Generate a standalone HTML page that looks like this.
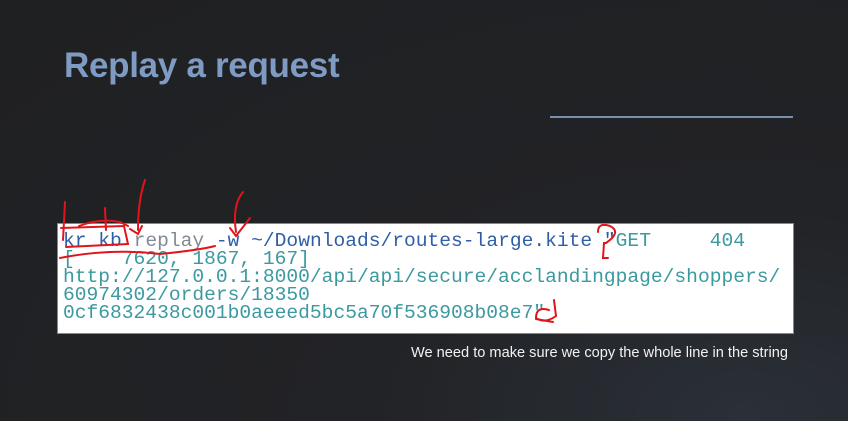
<!DOCTYPE html>
<html><head><meta charset="utf-8"><style>
html,body{margin:0;padding:0}
body{width:848px;height:421px;overflow:hidden;background:radial-gradient(ellipse at 88% 98%,#2a3038 0%,#222326 35%,#1f2022 100%);position:relative;font-family:"Liberation Sans",sans-serif}
.t{position:absolute;left:64px;top:46px;font-size:35px;font-weight:bold;color:#7f9bc4;letter-spacing:-0.3px}
.hr{position:absolute;left:550px;top:116px;width:243px;height:2px;background:#7890ab}
.box{position:absolute;left:57px;top:223px;width:735px;height:109px;background:#fff;border:1px solid #888}
pre{position:absolute;left:5px;top:8px;margin:0;font-family:"Liberation Mono",monospace;font-size:19.6px;line-height:18px;color:#3b999f}
.b{color:#2f5ea8}.g{color:#808a96}
.cap{position:absolute;left:411px;top:345px;font-size:14.6px;color:#f2f2f2}
svg{position:absolute;left:0;top:0}
</style></head><body>
<div class="t">Replay a request</div>
<div class="hr"></div>
<div class="box"><pre><span class="b">kr kb </span><span class="g">replay</span><span class="b"> -w ~/Downloads/routes-large.kite "</span>GET     404
[    7620, 1867, 167]
http://127.0.0.1:8000/api/api/secure/acclandingpage/shoppers/
60974302/orders/18350
0cf6832438c001b0aeeed5bc5a70f536908b08e7"</pre></div>
<div class="cap">We need to make sure we copy the whole line in the string</div>
<svg width="848" height="421" fill="none" stroke="#e0141c" stroke-width="2" stroke-linecap="round">
<path d="M65 202 L63 240"/>
<path d="M61 228 L124 226 L128 244 L66 247"/>
<path d="M79 226 Q100 218 120 222 L128 226"/>
<path d="M105 208 L106 230"/>
<path d="M145 180 Q138 200 138 230 M130 229 L138 234 L142 226"/>
<path d="M243 192 Q232 205 236 232 M230 228 L236 236 L250 218"/>
<path d="M60 258 Q110 248 160 254 Q200 250 215 246"/>
<path d="M598 232 Q598 222 610 226 Q622 232 606 243 L604 243 L603 258 L608 258"/>
<path d="M549 310 Q536 306 536 318 Q545 324 556 316 L554 300 M536 319 L553 322"/>
</svg>
</body></html>
